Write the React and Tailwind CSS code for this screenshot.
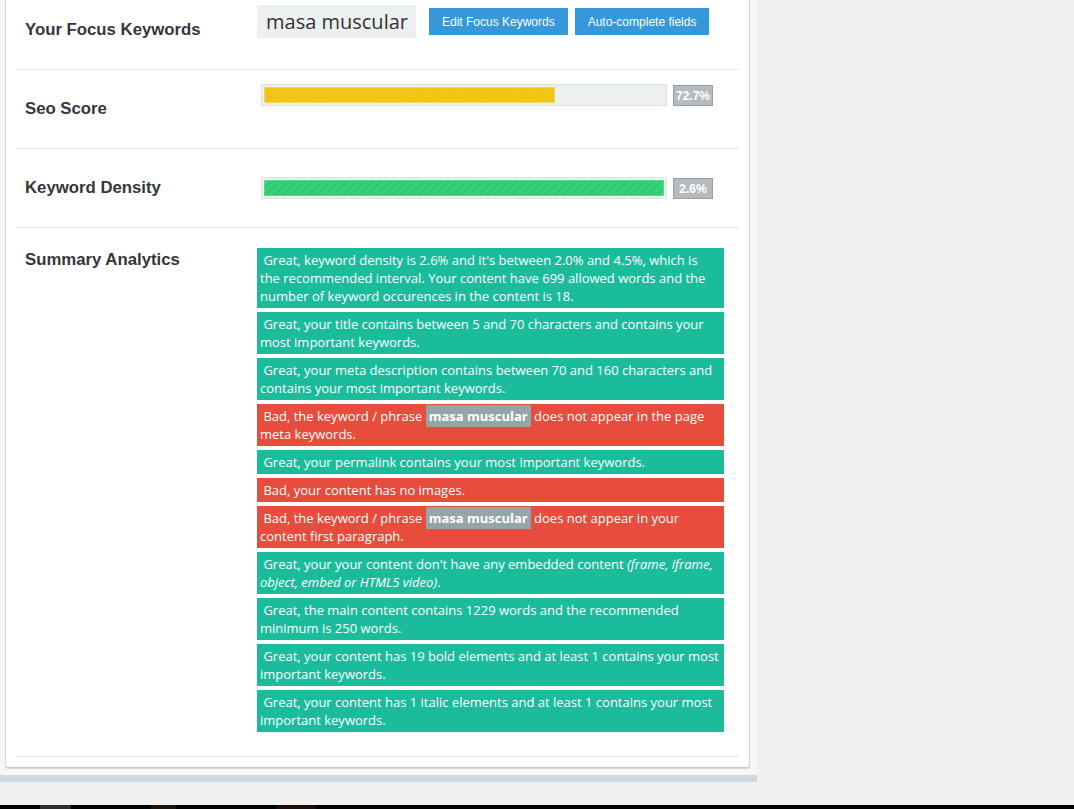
import React from 'react';

const Keyword = ({ children }) => (
  <span className="bg-[#95a5a6] font-bold px-[3px] py-[2px]">{children}</span>
);

const Msg = ({ bad, children }) => (
  <div
    className={`${bad ? 'bg-[#e74c3c]' : 'bg-[#1abc9c]'} text-white text-[13px] leading-[18px] px-[3px] py-[3px] mb-[4px] whitespace-nowrap`}
  >
    {children}
  </div>
);

const ProgressBar = ({ value, fill, edge }) => (
  <div className="flex items-start ml-[4px]">
    <div className="w-[406px] h-[22px] border border-[#dde1e4] bg-[#ecf0f1] p-[2px]">
      <div
        className={`h-full border ${fill} ${edge} bg-[image:repeating-linear-gradient(135deg,rgba(255,255,255,0.06)_0px,rgba(255,255,255,0.06)_3px,transparent_3px,transparent_6px)]`}
        style={{ width: `${value}%` }}
      />
    </div>
  </div>
);

const Badge = ({ children }) => (
  <div className="ml-[6px] mt-[1px] w-[40px] h-[21px] bg-[#b6bbbf] border border-[#979fa4] text-white font-bold text-[12px] flex items-center justify-center font-['Liberation_Sans',Arial,sans-serif]">
    {children}
  </div>
);

const Label = ({ children, top }) => (
  <div className={`w-[232px] shrink-0 text-[16.75px] leading-[20px] font-bold text-[#33373b] font-['Liberation_Sans',Arial,sans-serif] ${top}`}>
    {children}
  </div>
);

export default function App() {
  return (
    <div className="h-screen flex flex-col bg-[#f0f0f0] font-['Open_Sans',sans-serif] overflow-hidden">
      <div className="w-[757px] bg-[#f4f6f9] pl-[5px] pr-[7px] pb-[7px] border-b-[7px] border-[#cfd9e1]">
        <div className="w-[745px] bg-white border-x border-b border-[#cfd4d8] border-b-[#c2c6c9] rounded-b-[3px] shadow-[0_1px_1px_rgba(0,0,0,0.12)] px-[10px] pb-[10px]">
          {/* focus keywords */}
          <div className="h-[70px] border-b border-[#e6e9eb] flex items-start pl-[9px]">
            <Label top="mt-[20px]">Your Focus Keywords</Label>
            <div className="mt-[5px] flex items-center">
              <div className="h-[33px] bg-[#ecf0f1] pl-[9px] pr-[8px] flex items-center text-[20px] text-[#333]">
                masa muscular
              </div>
              <button className="ml-[13px] h-[27px] px-[13px] bg-[#3498db] text-white text-[12px] font-['Liberation_Sans',Arial,sans-serif]">
                Edit Focus Keywords
              </button>
              <button className="ml-[7px] h-[27px] px-[13px] bg-[#3498db] text-white text-[12px] font-['Liberation_Sans',Arial,sans-serif]">
                Auto-complete fields
              </button>
            </div>
          </div>

          {/* seo score */}
          <div className="h-[79px] border-b border-[#e6e9eb] flex items-start pl-[9px]">
            <Label top="mt-[29px]">Seo Score</Label>
            <div className="mt-[14px] flex items-start">
              <ProgressBar value={72.7} fill="bg-[#f1c40f]" edge="border-[#f3d35a]" />
              <Badge>72.7%</Badge>
            </div>
          </div>

          {/* keyword density */}
          <div className="h-[79px] border-b border-[#e6e9eb] flex items-start pl-[9px]">
            <Label top="mt-[29px]">Keyword Density</Label>
            <div className="mt-[28px] flex items-start">
              <ProgressBar value={100} fill="bg-[#2ecc71]" edge="border-[#5ad88e]" />
              <Badge>2.6%</Badge>
            </div>
          </div>

          {/* summary */}
          <div className="border-b border-[#e6e9eb] flex items-start pl-[9px] pt-[20px] pb-[20px]">
            <Label top="mt-[2px]">Summary Analytics</Label>
            <div className="w-[467px]">
              <Msg>
                {'\u00a0'}Great, keyword density is 2.6% and it's between 2.0% and 4.5%, which is<br />
                the recommended interval. Your content have 699 allowed words and the<br />
                number of keyword occurences in the content is 18.
              </Msg>
              <Msg>
                {'\u00a0'}Great, your title contains between 5 and 70 characters and contains your<br />
                most important keywords.
              </Msg>
              <Msg>
                {'\u00a0'}Great, your meta description contains between 70 and 160 characters and<br />
                contains your most important keywords.
              </Msg>
              <Msg bad>
                {'\u00a0'}Bad, the keyword / phrase <Keyword>masa muscular</Keyword> does not appear in the page<br />
                meta keywords.
              </Msg>
              <Msg>{'\u00a0'}Great, your permalink contains your most important keywords.</Msg>
              <Msg bad>{'\u00a0'}Bad, your content has no images.</Msg>
              <Msg bad>
                {'\u00a0'}Bad, the keyword / phrase <Keyword>masa muscular</Keyword> does not appear in your<br />
                content first paragraph.
              </Msg>
              <Msg>
                {'\u00a0'}Great, your your content don't have any embedded content <i>(frame, iframe,</i><br />
                <i>object, embed or HTML5 video)</i>.
              </Msg>
              <Msg>
                {'\u00a0'}Great, the main content contains 1229 words and the recommended<br />
                minimum is 250 words.
              </Msg>
              <Msg>
                {'\u00a0'}Great, your content has 19 bold elements and at least 1 contains your most<br />
                important keywords.
              </Msg>
              <Msg>
                {'\u00a0'}Great, your content has 1 italic elements and at least 1 contains your most<br />
                important keywords.
              </Msg>
            </div>
          </div>
        </div>
      </div>

      <div className="flex-1" />
      <div className="h-[4px] bg-black flex">
        <div className="ml-[40px] w-[31px] bg-[#2e2e2e]" />
        <div className="ml-[80px] w-[25px] bg-[#1c140e]" />
        <div className="ml-[100px] w-[40px] bg-[#1a0c0c]" />
      </div>
    </div>
  );
}
